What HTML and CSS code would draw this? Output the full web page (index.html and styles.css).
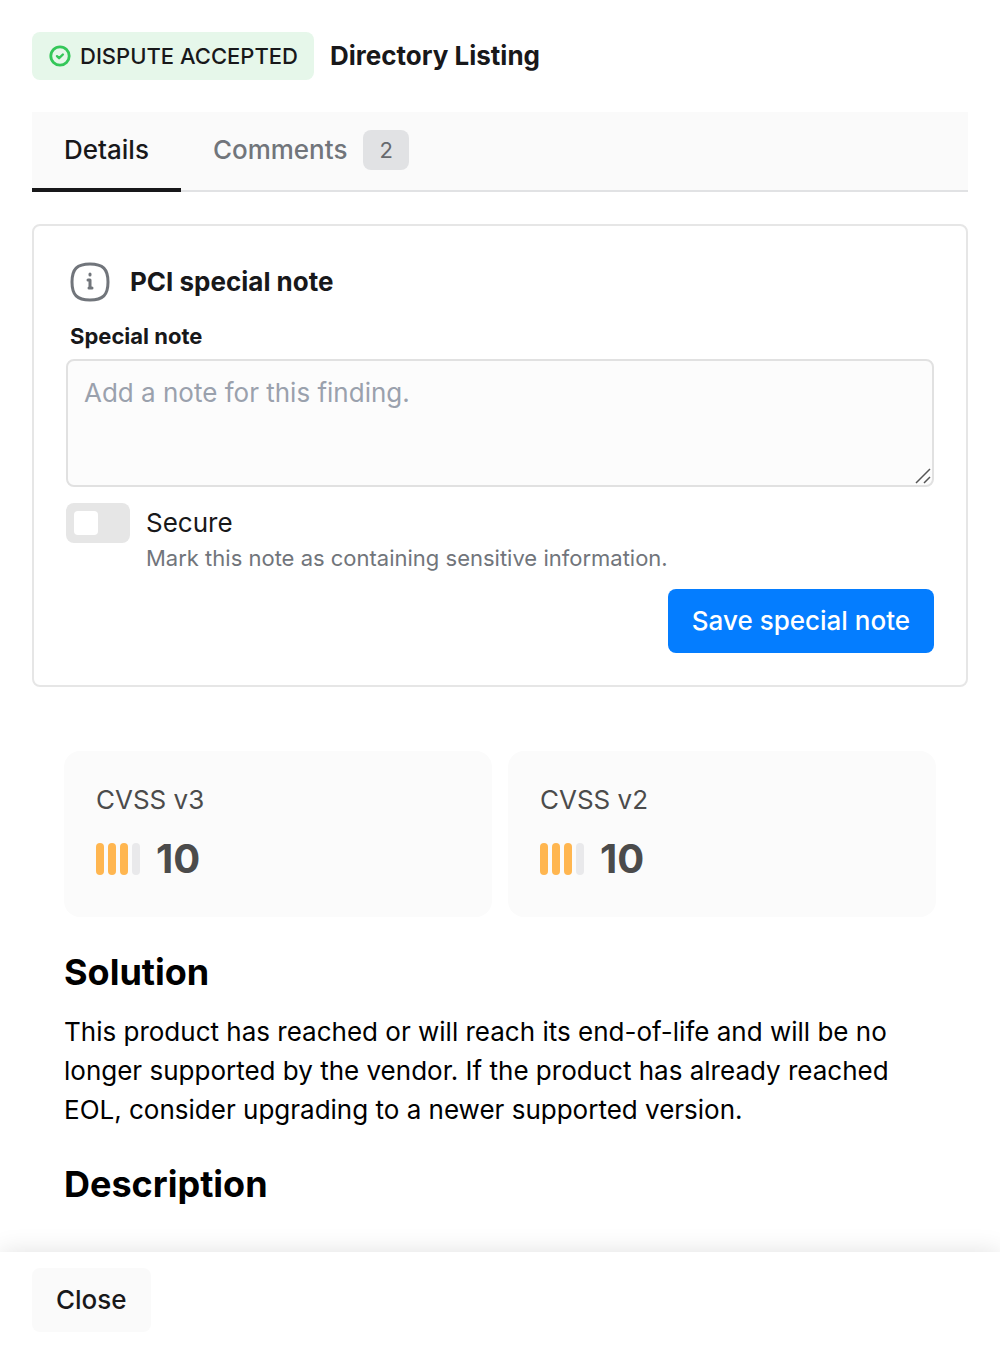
FILE: index.html
```html
<!DOCTYPE html>
<html lang="en">
<head>
  <meta charset="UTF-8" />
  <meta name="viewport" content="width=device-width, initial-scale=1" />
  <title>Directory Listing</title>
  <link rel="stylesheet" href="styles.css">
</head>
<body>

  <main class="content">
    <header class="page-header">
      <span class="status">
        <svg class="status-icon" viewBox="0 0 24 24" fill="none" stroke="currentColor" stroke-width="2.8" aria-hidden="true">
          <circle cx="12" cy="12" r="9.2"/>
          <path d="M9 12.200l2.100 2 3.800-3.700" stroke-width="2.400" stroke-linecap="round" stroke-linejoin="round"/>
        </svg>
        DISPUTE ACCEPTED
      </span>
      <h1>Directory Listing</h1>
    </header>

    <nav class="tabs">
      <a class="tab active" href="#details">Details</a>
      <a class="tab" href="#comments">Comments <span class="count">2</span></a>
    </nav>

    <form class="note-card">
      <div class="note-header">
        <svg class="note-icon" viewBox="0 0 48 48" fill="none" stroke="currentColor" stroke-width="3" stroke-linecap="round" stroke-linejoin="round" aria-hidden="true">
          <path d="M24 6C37 6 42 11 42 24C42 37 37 42 24 42C11 42 6 37 6 24C6 11 11 6 24 6Z"/>
          <path d="M22 22H24V30M23 30H26M24 16V17"/>
        </svg>
        <h2>PCI special note</h2>
      </div>

      <label class="note-label" for="note">Special note</label>
      <div class="note-field">
        <textarea id="note" placeholder="Add a note for this finding."></textarea>
        <svg class="grip" viewBox="0 0 16 16" fill="none" stroke="currentColor" stroke-width="1.5" aria-hidden="true">
          <path d="M1 15L15 1M9 15L15 9"/>
        </svg>
      </div>

      <div class="secure">
        <input class="toggle" type="checkbox" id="secure" aria-describedby="secureHelp" />
        <div>
          <label class="secure-label" for="secure">Secure</label>
          <p class="secure-help" id="secureHelp">Mark this note as containing sensitive information.</p>
        </div>
      </div>

      <button class="btn btn-primary" type="button">Save special note</button>
    </form>

    <section class="finding" id="details">
      <div class="scores">
        <div class="score">
          <div class="score-label">CVSS v3</div>
          <div class="score-value">
            <span class="bars"><i class="on"></i><i class="on"></i><i class="on"></i><i></i></span>
            10
          </div>
        </div>
        <div class="score">
          <div class="score-label">CVSS v2</div>
          <div class="score-value">
            <span class="bars"><i class="on"></i><i class="on"></i><i class="on"></i><i></i></span>
            10
          </div>
        </div>
      </div>

      <h3>Solution</h3>
      <p>This product has reached or will reach its end-of-life and will be no longer supported by the vendor. If the product has already reached EOL, consider upgrading to a newer supported version.</p>

      <h3>Description</h3>
    </section>
  </main>

  <footer class="footer">
    <button class="btn" type="button">Close</button>
  </footer>

</body>
</html>
```
FILE: styles.css
```css
* {
  box-sizing: border-box;
}

body {
  margin: 0;
  height: 100vh;
  display: flex;
  flex-direction: column;
  font-family: Inter, "Liberation Sans", sans-serif;
  font-size: 26px;
  line-height: 30px;
  color: #18181a;
  background: #fff;
}

h1, h2, h3, p {
  margin: 0;
}

.content {
  flex: 1;
  min-height: 0;
  overflow: auto;
  scrollbar-width: none;
  padding: 32px;
}

/* Header */
.page-header {
  display: flex;
  align-items: center;
  gap: 16px;
  margin-bottom: 32px;
}
.page-header h1 {
  font-size: 26px;
  font-weight: 700;
}
.status {
  display: flex;
  align-items: center;
  gap: 8px;
  height: 48px;
  padding: 0 16px;
  border-radius: 8px;
  background: #e6f7ea;
  font-size: 22px;
  font-weight: 500;
}
.status-icon {
  width: 24px;
  height: 24px;
  color: #34c759;
}

/* Tabs */
.tabs {
  display: flex;
  height: 80px;
  margin-bottom: 32px;
  background: #fafafa;
  box-shadow: inset 0 -2px #e1e2e4;
}
.tab {
  display: flex;
  align-items: center;
  gap: 16px;
  padding: 0 32px;
  border-bottom: 4px solid transparent;
  color: #71757b;
  font-weight: 500;
  text-decoration: none;
}
.tab.active {
  color: #18181a;
  border-color: #18181a;
}
.count {
  height: 40px;
  padding: 0 16px;
  border-radius: 8px;
  background: #e1e2e4;
  color: #66696e;
  font-size: 22px;
  font-weight: 400;
  line-height: 40px;
}

/* Special note form */
.note-card {
  display: flex;
  flex-direction: column;
  padding: 32px;
  border: 2px solid #e6e6e6;
  border-radius: 8px;
}
.note-header {
  display: flex;
  align-items: center;
  gap: 16px;
}
.note-header h2 {
  font-size: 26px;
  font-weight: 700;
}
.note-icon {
  width: 48px;
  height: 48px;
  color: #71757b;
}
.note-label {
  margin: 15px 0 8px;
  padding: 0 4px;
  font-size: 22px;
  font-weight: 700;
}
.note-field {
  position: relative;
  display: flex;
}
textarea {
  flex: 1;
  height: 128px;
  padding: 14px 16px;
  border: 2px solid #e1e1e1;
  border-radius: 8px;
  background: #fcfcfc;
  color: inherit;
  font: inherit;
  line-height: 36px;
  resize: vertical;
}
textarea::placeholder {
  color: #9aa1ad;
}
textarea::-webkit-resizer {
  background: transparent;
}
.grip {
  position: absolute;
  right: 3px;
  bottom: 3px;
  width: 16px;
  height: 16px;
  color: #555;
  pointer-events: none;
}

.secure {
  display: flex;
  gap: 16px;
  margin: 16px 0;
}
.toggle {
  appearance: none;
  flex: none;
  width: 64px;
  height: 40px;
  margin: 0;
  padding: 8px;
  border-radius: 8px;
  background: #e6e6e6;
  cursor: pointer;
}
.toggle::before {
  content: "";
  display: block;
  width: 24px;
  height: 24px;
  border-radius: 4px;
  background: #fff;
}
.toggle:checked {
  background: #047dff;
}
.toggle:checked::before {
  margin-left: auto;
}
.secure-label {
  display: block;
  line-height: 40px;
}
.secure-help {
  color: #71757b;
  font-size: 22px;
}

/* Buttons */
.btn {
  height: 64px;
  padding: 0 24px;
  border: none;
  border-radius: 8px;
  background: #fafafa;
  color: #18181a;
  font: inherit;
  font-weight: 500;
  cursor: pointer;
}
.btn-primary {
  align-self: flex-end;
  background: #047dff;
  color: #fff;
}

/* Finding details */
.finding {
  padding: 64px 32px 0;
  color: #000;
}
.scores {
  display: grid;
  grid-template-columns: 1fr 1fr;
  gap: 16px;
}
.score {
  padding: 32px;
  border-radius: 16px;
  background: #fbfbfb;
  color: #4b4b4b;
}
.score-label {
  margin-bottom: 16px;
  line-height: 34px;
}
.score-value {
  display: flex;
  align-items: center;
  gap: 16px;
  font-size: 40px;
  font-weight: 700;
  line-height: 52px;
}
.bars {
  display: flex;
  gap: 4px;
}
.bars i {
  width: 8px;
  height: 32px;
  border-radius: 4px;
  background: #e9e9eb;
}
.bars .on {
  background: #ffb650;
}
.finding h3 {
  margin: 28px 0 13px;
  font-size: 36px;
  font-weight: 700;
  line-height: 54px;
}
.finding .scores + h3 {
  color: #000;
}
.finding p {
  line-height: 39px;
}

/* Footer */
.footer {
  position: relative;
  padding: 16px 32px;
  background: #fff;
  box-shadow: 0 0 24px rgba(0, 0, 0, 0.12);
}
```
